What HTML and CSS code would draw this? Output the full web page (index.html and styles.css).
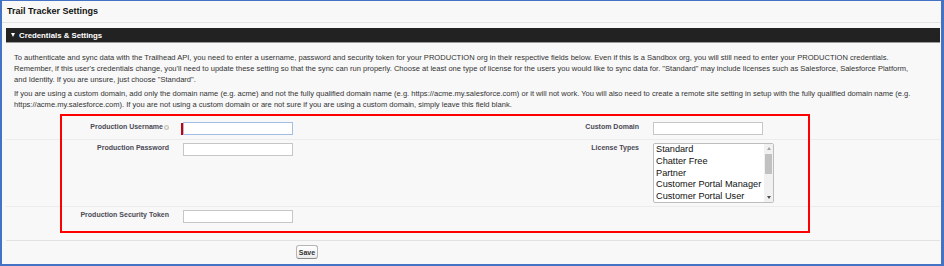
FILE: index.html
```html
<!DOCTYPE html>
<html>
<head>
  <title>Trail Tracker Settings</title>
  <link rel="stylesheet" href="styles.css">
</head>
<body>
<div class="frame">
  <div class="page-title">Trail Tracker Settings</div>

  <div class="section-head"><span class="twisty"></span>Credentials &amp; Settings</div>

  <div class="section">
    <div class="intro">
      <p>To authenticate and sync data with the Trailhead API, you need to enter a username, password and security token for your PRODUCTION org in their respective fields below. Even if this is a Sandbox org, you will still need to enter your PRODUCTION credentials.<br>
      Remember, if this user's credentials change, you'll need to update these setting so that the sync can run properly. Choose at least one type of license for the users you would like to sync data for. "Standard" may include licenses such as Salesforce, Salesforce Platform, and Identity. If you are unsure, just choose "Standard".</p>
      <p>If you are using a custom domain, add only the domain name (e.g. acme) and not the fully qualified domain name (e.g. https://acme.my.salesforce.com) or it will not work. You will also need to create a remote site setting in setup with the fully qualified domain name (e.g. https://acme.my.salesforce.com). If you are not using a custom domain or are not sure if you are using a custom domain, simply leave this field blank.</p>
    </div>

    <form class="settings-form">
      <div class="row row-first">
        <label class="label-col" for="username">Production Username<svg class="help" width="5" height="5" viewBox="0 0 10 10"><circle cx="5" cy="5" r="5" fill="#cdc6b8"/><circle cx="5" cy="5" r="2.4" fill="#f4f1ea"/></svg></label>
        <div class="data-col"><div class="required"><span class="required-bar"></span><input type="text" id="username" class="text-input focused"></div></div>
        <label class="label-col" for="domain">Custom Domain</label>
        <div class="data-col"><input type="text" id="domain" class="text-input"></div>
      </div>
      <div class="row">
        <label class="label-col" for="password">Production Password</label>
        <div class="data-col"><input type="password" id="password" class="text-input"></div>
        <label class="label-col" for="licenses">License Types</label>
        <div class="data-col">
          <div class="listbox">
            <select id="licenses" class="license-list" multiple size="5">
              <option>Standard</option>
              <option>Chatter Free</option>
              <option>Partner</option>
              <option>Customer Portal Manager</option>
              <option>Customer Portal User</option>
              <option>High Volume Portal</option>
              <option>Chatter External</option>
              <option>Partner Community</option>
              <option>Customer Community</option>
            </select>
            <!-- scrollbar drawn over the list -->
            <div class="scrollbar">
              <span class="arrow arrow-up"></span>
              <span class="track"><span class="thumb"></span></span>
              <span class="arrow arrow-down"></span>
            </div>
          </div>
        </div>
      </div>
      <div class="row row-last">
        <label class="label-col" for="token">Production Security Token</label>
        <div class="data-col"><input type="text" id="token" class="text-input"></div>
        <div class="label-col"></div>
        <div class="data-col"></div>
      </div>
    </form>
  </div>

  <div class="buttons">
    <button type="button" class="btn">Save</button>
  </div>

  <!-- highlight box drawn over the form -->
  <div class="callout"></div>
</div>
</body>
</html>
```

FILE: styles.css
```css
html, body {
  margin: 0;
  padding: 0;
}
body {
  font-family: "Liberation Sans", Arial, sans-serif;
  background-color: #f8f8f8;
  color: #222;
}
.frame {
  position: relative;
  box-sizing: border-box;
  width: 944px;
  height: 266px;
  border-style: solid;
  border-color: #4472c4;
  border-width: 1px 3px 2px 2px;
  background-color: #f8f8f8;
  overflow: hidden;
}

/* Page title */
.page-title {
  height: 21px;
  line-height: 21px;
  padding-left: 5px;
  font-size: 9px;
  font-weight: bold;
  color: #111;
  border-bottom: 1px solid #e3e3e3;
}

/* Dark section header */
.section-head {
  display: flex;
  align-items: center;
  margin: 5px 1px 0 4px;
  height: 14px;
  padding-left: 5px;
  background-color: #222;
  border-bottom: 1px solid #9a9a9a;
  color: #fff;
  font-size: 7.8px;
  font-weight: bold;
}
.twisty {
  width: 0;
  height: 0;
  margin-right: 4px;
  border-left: 2.5px solid transparent;
  border-right: 2.5px solid transparent;
  border-top: 4px solid #fff;
}

.section {
  margin: 0 1px 0 4px;
}
.intro {
  padding: 9px 24px 0 8px;
  font-size: 7.55px;
  line-height: 11px;
  color: #333;
}
.intro p {
  margin: 0 0 3px 0;
}

/* Form rows */
.settings-form {
  margin-top: 8px;
}
.row {
  display: grid;
  grid-template-columns: 168px 302px 168px 1fr;
  padding: 3px 0;
  border-bottom: 1px solid #ececec;
}
.row-first {
  padding: 4px 0;
}
.row-last {
  padding: 3px 0 17px 0;
  border-bottom-color: #e2e2e2;
}
.label-col {
  padding-right: 5px;
  text-align: right;
  font-size: 7px;
  font-weight: bold;
  line-height: 10px;
  color: #4a4a56;
}
.help {
  margin-left: 1px;
  vertical-align: -0.5px;
}
.data-col {
  padding-left: 9px;
}
.required {
  position: relative;
  width: 110px;
}
.required-bar {
  position: absolute;
  left: -2px;
  top: 1px;
  width: 2px;
  height: 12px;
  background-color: #c00;
}
.text-input {
  display: block;
  box-sizing: border-box;
  width: 110px;
  height: 13px;
  margin: 0;
  padding: 0 2px;
  border: 1px solid #c6c6c6;
  background-color: #fff;
  font-size: 8px;
}
.text-input.focused {
  border-color: #a3bde6;
}

/* License multi select */
.listbox {
  position: relative;
  width: 121px;
  height: 60px;
}
.license-list {
  display: block;
  box-sizing: border-box;
  width: 121px;
  height: 60px;
  margin: 0;
  padding: 0;
  overflow: hidden;
  border: 1px solid #bdbdbd;
  background-color: #fff;
  font-family: "Liberation Sans", Arial, sans-serif;
  font-size: 9.2px;
  color: #111;
}
.license-list option {
  padding: 0 2px;
  line-height: 11.8px;
  min-height: 11.8px;
}
.scrollbar {
  position: absolute;
  top: 1px;
  right: 1px;
  bottom: 1px;
  width: 9px;
  display: flex;
  flex-direction: column;
  background-color: #f1f1f1;
}
.arrow {
  height: 9px;
  display: flex;
  align-items: center;
  justify-content: center;
}
.arrow-up::before,
.arrow-down::before {
  content: "";
  width: 0;
  height: 0;
  border-left: 2.5px solid transparent;
  border-right: 2.5px solid transparent;
}
.arrow-up::before {
  border-bottom: 3px solid #a3a3a3;
}
.arrow-down::before {
  border-top: 3px solid #505050;
}
.track {
  flex: 1;
  padding: 1px 1px 0 1px;
}
.thumb {
  display: block;
  height: 20px;
  background-color: #c1c1c1;
}

/* Bottom buttons */
.buttons {
  padding-top: 4px;
  padding-left: 294px;
}
.btn {
  display: block;
  width: 22px;
  height: 14px;
  padding: 0;
  border: 1px solid #b5b5b5;
  border-bottom-color: #8a8a8a;
  border-radius: 3px;
  background: linear-gradient(#ffffff, #ececec);
  font-family: "Liberation Sans", Arial, sans-serif;
  font-size: 7px;
  font-weight: bold;
  color: #333;
}

/* Red annotation box */
.callout {
  position: absolute;
  left: 58px;
  top: 113px;
  width: 750px;
  height: 119px;
  box-sizing: border-box;
  border: 2px solid #ff0000;
  pointer-events: none;
}
```
